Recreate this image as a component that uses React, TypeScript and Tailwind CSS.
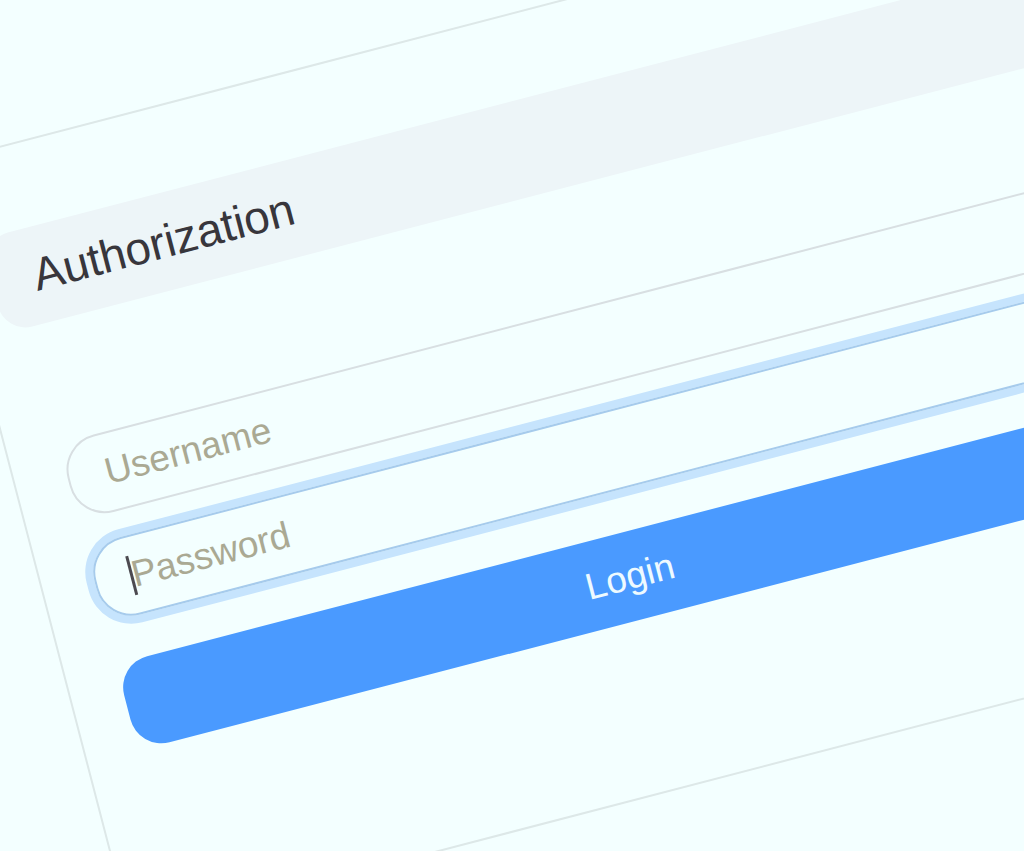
import { InputHTMLAttributes } from "react";
import clsx from "clsx";

interface FieldProps extends InputHTMLAttributes<HTMLInputElement> {
    label: string,
    active?: boolean
}

function Field(props: FieldProps) {
    const { label, active, ...rest } = props;

    return <div className="relative">
        <input
            aria-label={label}
            placeholder={label}
            className={clsx(
                "block h-20 w-full rounded-[36px] border-2 bg-transparent px-9 text-[37px] text-[#3a3a40] placeholder-[#aaa993] outline-none",
                active ? "border-[#a6cbec] ring-8 ring-[#c6e4fd] caret-transparent" : "border-[#d8dfe2]"
            )}
            {...rest}
        />
        {active && <span className="absolute left-9 top-5 h-10 w-[3px] bg-[#4c4a50]" />}
    </div>
}

export default function App() {
    return <main className="h-screen overflow-hidden bg-[#f3ffff] pt-[164px] font-['Liberation_Sans',Arial,sans-serif]">
        <section className="-ml-[70px] w-[112vw] origin-top-left rotate-[-14.6deg] rounded-[28px] border-2 border-[#dde8e8] px-7 pt-21 pb-43">
            <header className="rounded-[28px] bg-[#edf5f8] px-[42px] py-6">
                <h1 className="text-[46px] leading-[49px] text-[#38363c]">Authorization</h1>
            </header>

            <form className="flex flex-col px-6 pt-30" onSubmit={(e) => e.preventDefault()}>
                <div className="flex flex-col gap-[26px]">
                    <Field id="username" label="Username" type="text" />
                    <Field id="password" label="Password" type="password" active />
                </div>
                <button type="submit" className="mt-[42px] h-[89px] cursor-pointer rounded-[32px] bg-[#4a9aff] text-[37px] text-[#eefaff]">
                    Login
                </button>
            </form>
        </section>
    </main>
}
